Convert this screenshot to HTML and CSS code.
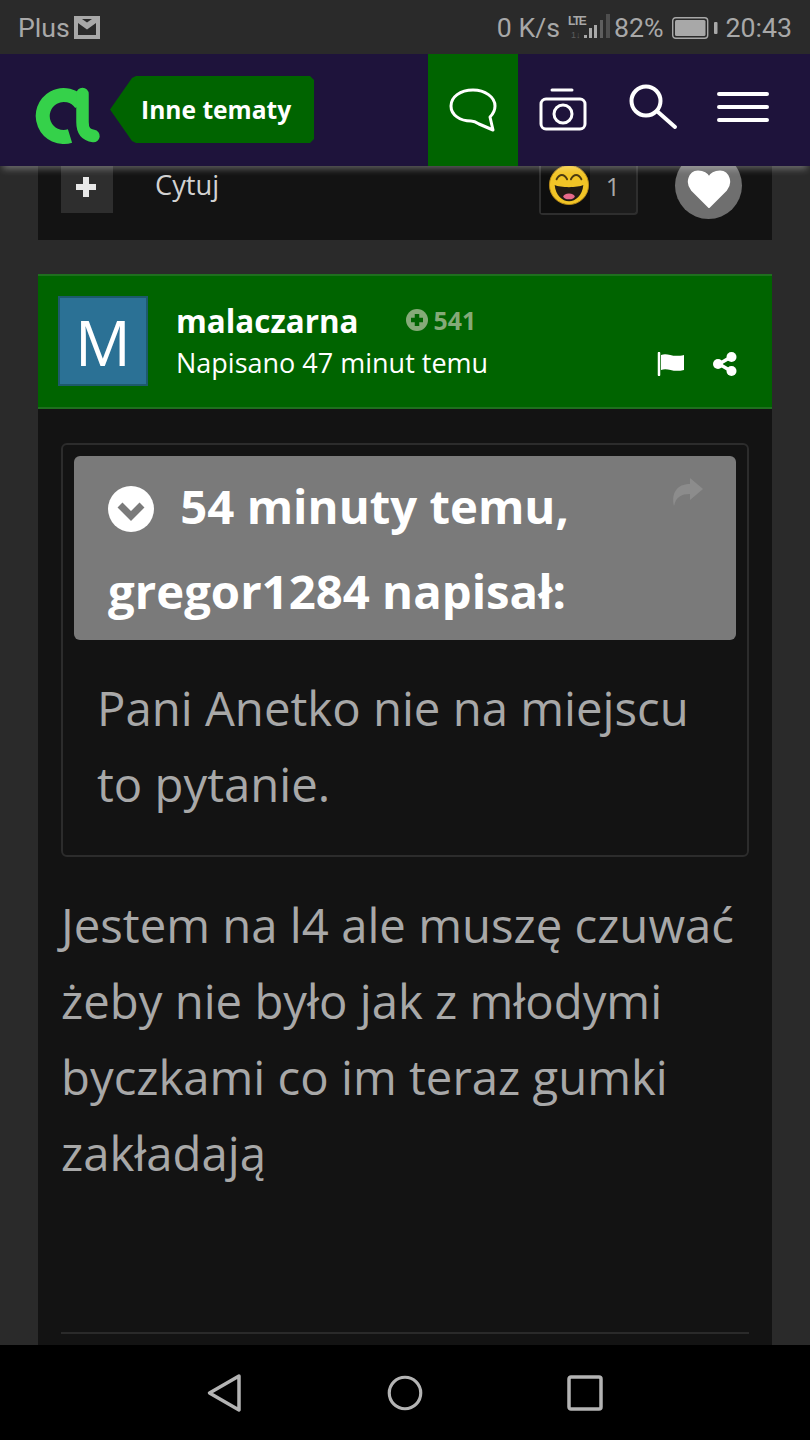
FILE: index.html
```html
<!DOCTYPE html>
<html lang="pl">
<head>
<meta charset="utf-8">
<title>Inne tematy</title>
<link rel="stylesheet" href="styles.css">
</head>
<body>
<div class="phone">
  <div class="status">
    <div class="status-left">
      <span>Plus</span>
      <svg class="mail" viewBox="0 0 26 23"><rect width="26" height="23" fill="#a8a8a8"/><path d="M8 3h10l-5 3.500z" fill="#2a2a2a"/><path d="M4 7l9 6.500L22 7v12H4z" fill="#2a2a2a"/></svg>
    </div>
    <div class="status-right">
      <span>0 K/s</span>
      <svg class="signal" viewBox="0 0 42 25"><text x="0" y="11" class="lte">LTE</text><text x="3" y="24" class="lte-sub">1↓</text><rect x="16" y="21" width="3" height="3" fill="#a8a8a8"/><rect x="21" y="14" width="3" height="10" fill="#a8a8a8"/><rect x="26" y="11" width="3" height="13" fill="#a8a8a8"/><rect x="32" y="6" width="3" height="18" fill="#5e5e5e"/><rect x="38" y="0" width="4" height="24" fill="#4e4e4e"/></svg>
      <span class="pct">82%</span>
      <svg class="battery" viewBox="0 0 46 22"><rect x=".7" y=".7" width="35" height="20.600" rx="3" fill="none" stroke="#a8a8a8" stroke-width="1.400"/><rect x="3" y="3" width="30.500" height="16" rx="1.500" fill="#a8a8a8"/><rect x="42" y="5" width="3.500" height="12" rx="1" fill="#a8a8a8"/></svg>
      <span class="clock">20:43</span>
    </div>
  </div>

  <header class="nav">
    <svg class="logo" viewBox="0 0 66 58"><path d="M46 18A21 21 0 1 0 35 50" fill="none" stroke="#35d14a" stroke-width="14"/><path d="M47.500 8V36C47.500 45 51 49 58.500 50" fill="none" stroke="#35d14a" stroke-width="12.500" stroke-linecap="round"/></svg>
    <div class="crumb">Inne tematy</div>
    <div class="nav-icons">
      <div class="nav-btn active">
        <svg viewBox="0 0 48 44"><path d="M24 2C11 2 2 9 2 18c0 9 9 15 20 15 3 0 5 1 8 3l14 6-3-13c3-3 5-7 5-11C46 9 36 2 24 2z" fill="none" stroke="#fff" stroke-width="3" stroke-linejoin="round"/></svg>
      </div>
      <div class="nav-btn">
        <svg viewBox="0 0 48 44"><path d="M13 2h20" stroke="#fff" stroke-width="3" stroke-linecap="round"/><rect x="2" y="11" width="44" height="30" rx="5" fill="none" stroke="#fff" stroke-width="3"/><circle cx="24" cy="26" r="9" fill="none" stroke="#fff" stroke-width="3"/></svg>
      </div>
      <div class="nav-btn">
        <svg viewBox="0 0 50 46"><circle cx="18" cy="17" r="14.500" fill="none" stroke="#fff" stroke-width="4"/><path d="M30 28l17 15" stroke="#fff" stroke-width="4" stroke-linecap="round"/></svg>
      </div>
      <div class="nav-btn">
        <svg viewBox="0 0 52 32"><path d="M2 3h48M2 16h48M2 29h48" stroke="#fff" stroke-width="4" stroke-linecap="round"/></svg>
      </div>
    </div>
  </header>

  <main class="content">
    <section class="card-actions">
      <div class="plus-btn">
        <svg viewBox="0 0 22 22"><path d="M11 1v20M1 11h20" stroke="#e8e8e8" stroke-width="6"/></svg>
      </div>
      <span class="quote-link">Cytuj</span>
      <div class="reaction">
        <div class="reaction-icon">
          <svg viewBox="0 0 44 44"><circle cx="22" cy="22" r="20.500" fill="#f1c426" stroke="#b98a17" stroke-width="1"/><path d="M7 22c6 3 24 3 30 0-1 11-8 17-15 17S8 33 7 22z" fill="#221c14"/><ellipse cx="22" cy="34" rx="6" ry="3" fill="#e86a8a"/><path d="M9 16c3-6 8-6 11 0M24 16c3-6 8-6 11 0" fill="none" stroke="#4a3a10" stroke-width="2" stroke-linecap="round"/></svg>
        </div>
        <span class="reaction-count">1</span>
      </div>
      <div class="like">
        <svg viewBox="0 0 46 40"><path d="M23 38L6 21C0 14 3 3 12 2.500c5 0 9 2 11 6 2-4 6-6 11-6 9 .5 12 11.500 6 18.500z" fill="#fff" stroke="#fff" stroke-width="2" stroke-linejoin="round"/></svg>
      </div>
    </section>

    <article class="post">
      <div class="post-head">
        <div class="avatar">M</div>
        <div class="post-meta">
          <div class="name-row">
            <span class="name">malaczarna</span>
            <span class="rep">
              <svg viewBox="0 0 22 22"><circle cx="11" cy="11" r="11" fill="#85aa78"/><path d="M11 5v12M5 11h12" stroke="#006400" stroke-width="4.500"/></svg>
              541
            </span>
          </div>
          <div class="posted">Napisano 47 minut temu</div>
        </div>
        <div class="post-tools">
          <svg class="flag" viewBox="0 0 28 24"><path d="M2 1v22" stroke="#fff" stroke-width="2.500" stroke-linecap="round"/><path d="M4 3c7-3 10 3 23 0v15c-12 3-16-3-23 0z" fill="#fff"/></svg>
          <svg class="share" viewBox="0 0 24 24"><path d="M18 5L6 12l12 7" stroke="#fff" stroke-width="3.500" fill="none"/><circle cx="18.500" cy="5" r="5" fill="#fff"/><circle cx="5" cy="12" r="5" fill="#fff"/><circle cx="18.500" cy="19" r="5" fill="#fff"/></svg>
        </div>
      </div>

      <div class="post-body">
        <blockquote class="quote">
          <div class="quote-head">
            <svg class="quote-open" viewBox="0 0 46 46"><circle cx="23" cy="23" r="23" fill="#fff"/><path d="M12 19l11 11 11-11" fill="none" stroke="#7a7a7a" stroke-width="7"/></svg>
            <span class="quote-title">54 minuty temu, gregor1284 napisał:</span>
            <svg class="quote-jump" viewBox="0 0 32 28"><path d="M19 0l13 11-13 11v-6C10 16 5 19 3 28 0 15 6 6 19 6z" fill="#8c8c8c"/></svg>
          </div>
          <p class="quote-text">Pani Anetko nie na miejscu to pytanie.</p>
        </blockquote>
        <p class="post-text">Jestem na l4 ale muszę czuwać żeby nie było jak z młodymi byczkami co im teraz gumki zakładają</p>
        <div class="divider"></div>
      </div>
    </article>
  </main>

  <footer class="softkeys">
    <svg class="key key-back" viewBox="0 0 36 40"><path d="M32 3L2.500 20 32 37z" fill="none" stroke="#b4b4b4" stroke-width="3.500" stroke-linejoin="round"/></svg>
    <svg class="key" viewBox="0 0 40 40"><circle cx="20" cy="20" r="17.500" fill="none" stroke="#b4b4b4" stroke-width="3.500"/></svg>
    <svg class="key" viewBox="0 0 36 36"><rect x="2" y="2" width="32" height="32" rx="2" fill="none" stroke="#b4b4b4" stroke-width="3.500"/></svg>
  </footer>
</div>
</body>
</html>
```
FILE: styles.css
```css
* { box-sizing: border-box; }
html, body { margin: 0; padding: 0; background: #000; }
body { font-family: "Open Sans", "Noto Sans", sans-serif; }

.phone {
  width: 810px;
  height: 1440px;
  display: flex;
  flex-direction: column;
  overflow: hidden;
  background: #2a2a2a;
}

/* status bar */
.status {
  height: 54px;
  flex: none;
  display: flex;
  justify-content: space-between;
  align-items: center;
  padding: 2px 18px 0;
  background: #2a2a2a;
  color: #a8a8a8;
  font-family: Roboto, "Liberation Sans", sans-serif;
  font-size: 26.700px;
}
.status-left, .status-right { display: flex; align-items: center; }
.status-left { gap: 4px; }
.mail { width: 26px; height: 23px; margin-top: -2px; }
.signal { width: 42px; height: 25px; margin: -4px 0 0 8px; }
.lte { font: bold 12px "Liberation Sans", sans-serif; fill: #a8a8a8; letter-spacing: -1.500px; }
.lte-sub { font: 9px "Liberation Sans", sans-serif; fill: #5e5e5e; }
.pct { margin-left: 4px; }
.battery { width: 46px; height: 22px; margin: -1px 0 0 8px; }
.clock { margin-left: 8px; }

/* nav */
.nav {
  height: 112px;
  flex: none;
  display: flex;
  align-items: center;
  background: #1e133b;
  position: relative;
  z-index: 2;
  box-shadow: 0 6px 7px -3px rgba(255, 255, 255, .32);
  padding-left: 35px;
}
.logo { width: 66px; height: 58px; margin-top: 10px; flex: none; }
.crumb {
  width: 204px;
  height: 67px;
  margin: -1px 0 0 9px;
  display: flex;
  align-items: center;
  padding-left: 31px;
  background: #006400;
  clip-path: polygon(0 50%, 22px 2px, 26px 0, 200px 0, 204px 4px, 204px 63px, 200px 67px, 26px 67px, 22px 65px);
  color: #fff;
  font-size: 24.600px;
  font-weight: 700;
}
.nav-icons { margin-left: 114px; display: flex; height: 100%; }
.nav-btn { width: 90px; display: flex; align-items: center; justify-content: center; }
.nav-btn svg { width: 48px; height: 44px; }
.nav-btn.active { background: #006400; }
.nav-btn:nth-child(3) svg { width: 50px; height: 46px; margin-bottom: 6px; }
.nav-btn:nth-child(4) svg { width: 52px; height: 32px; margin-bottom: 6px; }

/* content */
.content { flex: 1; min-height: 0; overflow: hidden; padding: 0 38px; }

.card-actions {
  height: 74px;
  background: #131313;
  display: flex;
  align-items: flex-start;
  padding: 0 30px 0 23px;
  margin-bottom: 34px;
}
.plus-btn {
  width: 52px;
  height: 47px;
  background: #2e2e2e;
  display: flex;
  align-items: center;
  justify-content: center;
}
.plus-btn svg { width: 22px; height: 22px; margin: 0 2px 6px 0; }
.quote-link { margin-left: 42px; color: #d2d2d2; font-size: 27.300px; line-height: 38px; }
.reaction {
  margin-left: auto;
  width: 99px;
  height: 49px;
  border: 2px solid #2e2e2e;
  border-top: 0;
  border-radius: 0 0 4px 4px;
  display: flex;
  background: #1c1c1c;
}
.reaction-icon { width: 49px; height: 47px; background: #0e0e0e; display: flex; justify-content: center; }
.reaction-icon svg { width: 42px; height: 42px; margin: -2px 0 0 6px; flex: none; }
.reaction-count { flex: 1; text-align: center; color: #a8a8a8; font-size: 25px; line-height: 40px; }
.like {
  width: 67px;
  height: 67px;
  margin: -14px 0 0 37px;
  border-radius: 50%;
  background: #6f6f6f;
  display: flex;
  align-items: center;
  justify-content: center;
}
.like svg { width: 46px; height: 40px; margin-top: 6px; filter: blur(.6px); }

/* post */
.post { background: #131313; height: 1100px; }
.post-head {
  height: 135px;
  background: #006400;
  border-top: 2px solid #1f6f1f;
  border-bottom: 2px solid #1f6f1f;
  display: flex;
  align-items: flex-start;
  padding: 20px 35px 0 20px;
}
.avatar {
  width: 90px;
  height: 90px;
  flex: none;
  background: #2b7195;
  border: 2px solid #1d5a6c;
  color: #fff;
  font-size: 62px;
  line-height: 88px;
  text-align: center;
}
.post-meta { margin-left: 28px; flex: 1; }
.name-row { display: flex; align-items: center; height: 48px; }
.name { color: #fff; font-size: 31.400px; font-weight: 700; }
.rep {
  margin-left: 47px;
  display: flex;
  align-items: center;
  gap: 6px;
  color: #85aa78;
  font-size: 24.800px;
  font-weight: 700;
}
.rep svg { width: 22px; height: 22px; }
.posted { color: #fff; font-size: 27px; line-height: 37px; }
.post-tools { display: flex; gap: 28px; align-items: center; margin-top: 56px; }
.flag { width: 28px; height: 24px; }
.share { width: 24px; height: 24px; }

.post-body { padding: 34px 23px 0; }
.quote {
  margin: 0;
  height: 414px;
  border: 2px solid #2c2c2c;
  border-radius: 6px;
  padding: 11px;
}
.quote-head {
  position: relative;
  height: 184px;
  padding: 7px 34px 0;
  background: #7a7a7a;
  border-radius: 6px;
  color: #fff;
  font-size: 47.300px;
  font-weight: 700;
  line-height: 85px;
}
.quote-open { width: 46px; height: 46px; margin-right: 14px; vertical-align: -8px; }
.quote-jump { position: absolute; top: 22px; right: 33px; width: 32px; height: 28px; }
.quote-text {
  margin: 30px 0 0;
  padding: 0 20px 0 23px;
  color: #a8a8a8;
  font-size: 47.300px;
  line-height: 76px;
}
.post-text {
  margin: 30px 0 0;
  color: #a8a8a8;
  font-size: 47.300px;
  line-height: 76px;
}
.divider { height: 2px; margin-top: 141px; background: #2a2a2a; }

/* soft keys */
.softkeys {
  height: 95px;
  flex: none;
  position: relative;
  z-index: 2;
  background: #000;
  display: flex;
  justify-content: center;
  align-items: center;
  gap: 144px;
}
.key { width: 36px; height: 36px; }
.key-back { height: 40px; }
```
